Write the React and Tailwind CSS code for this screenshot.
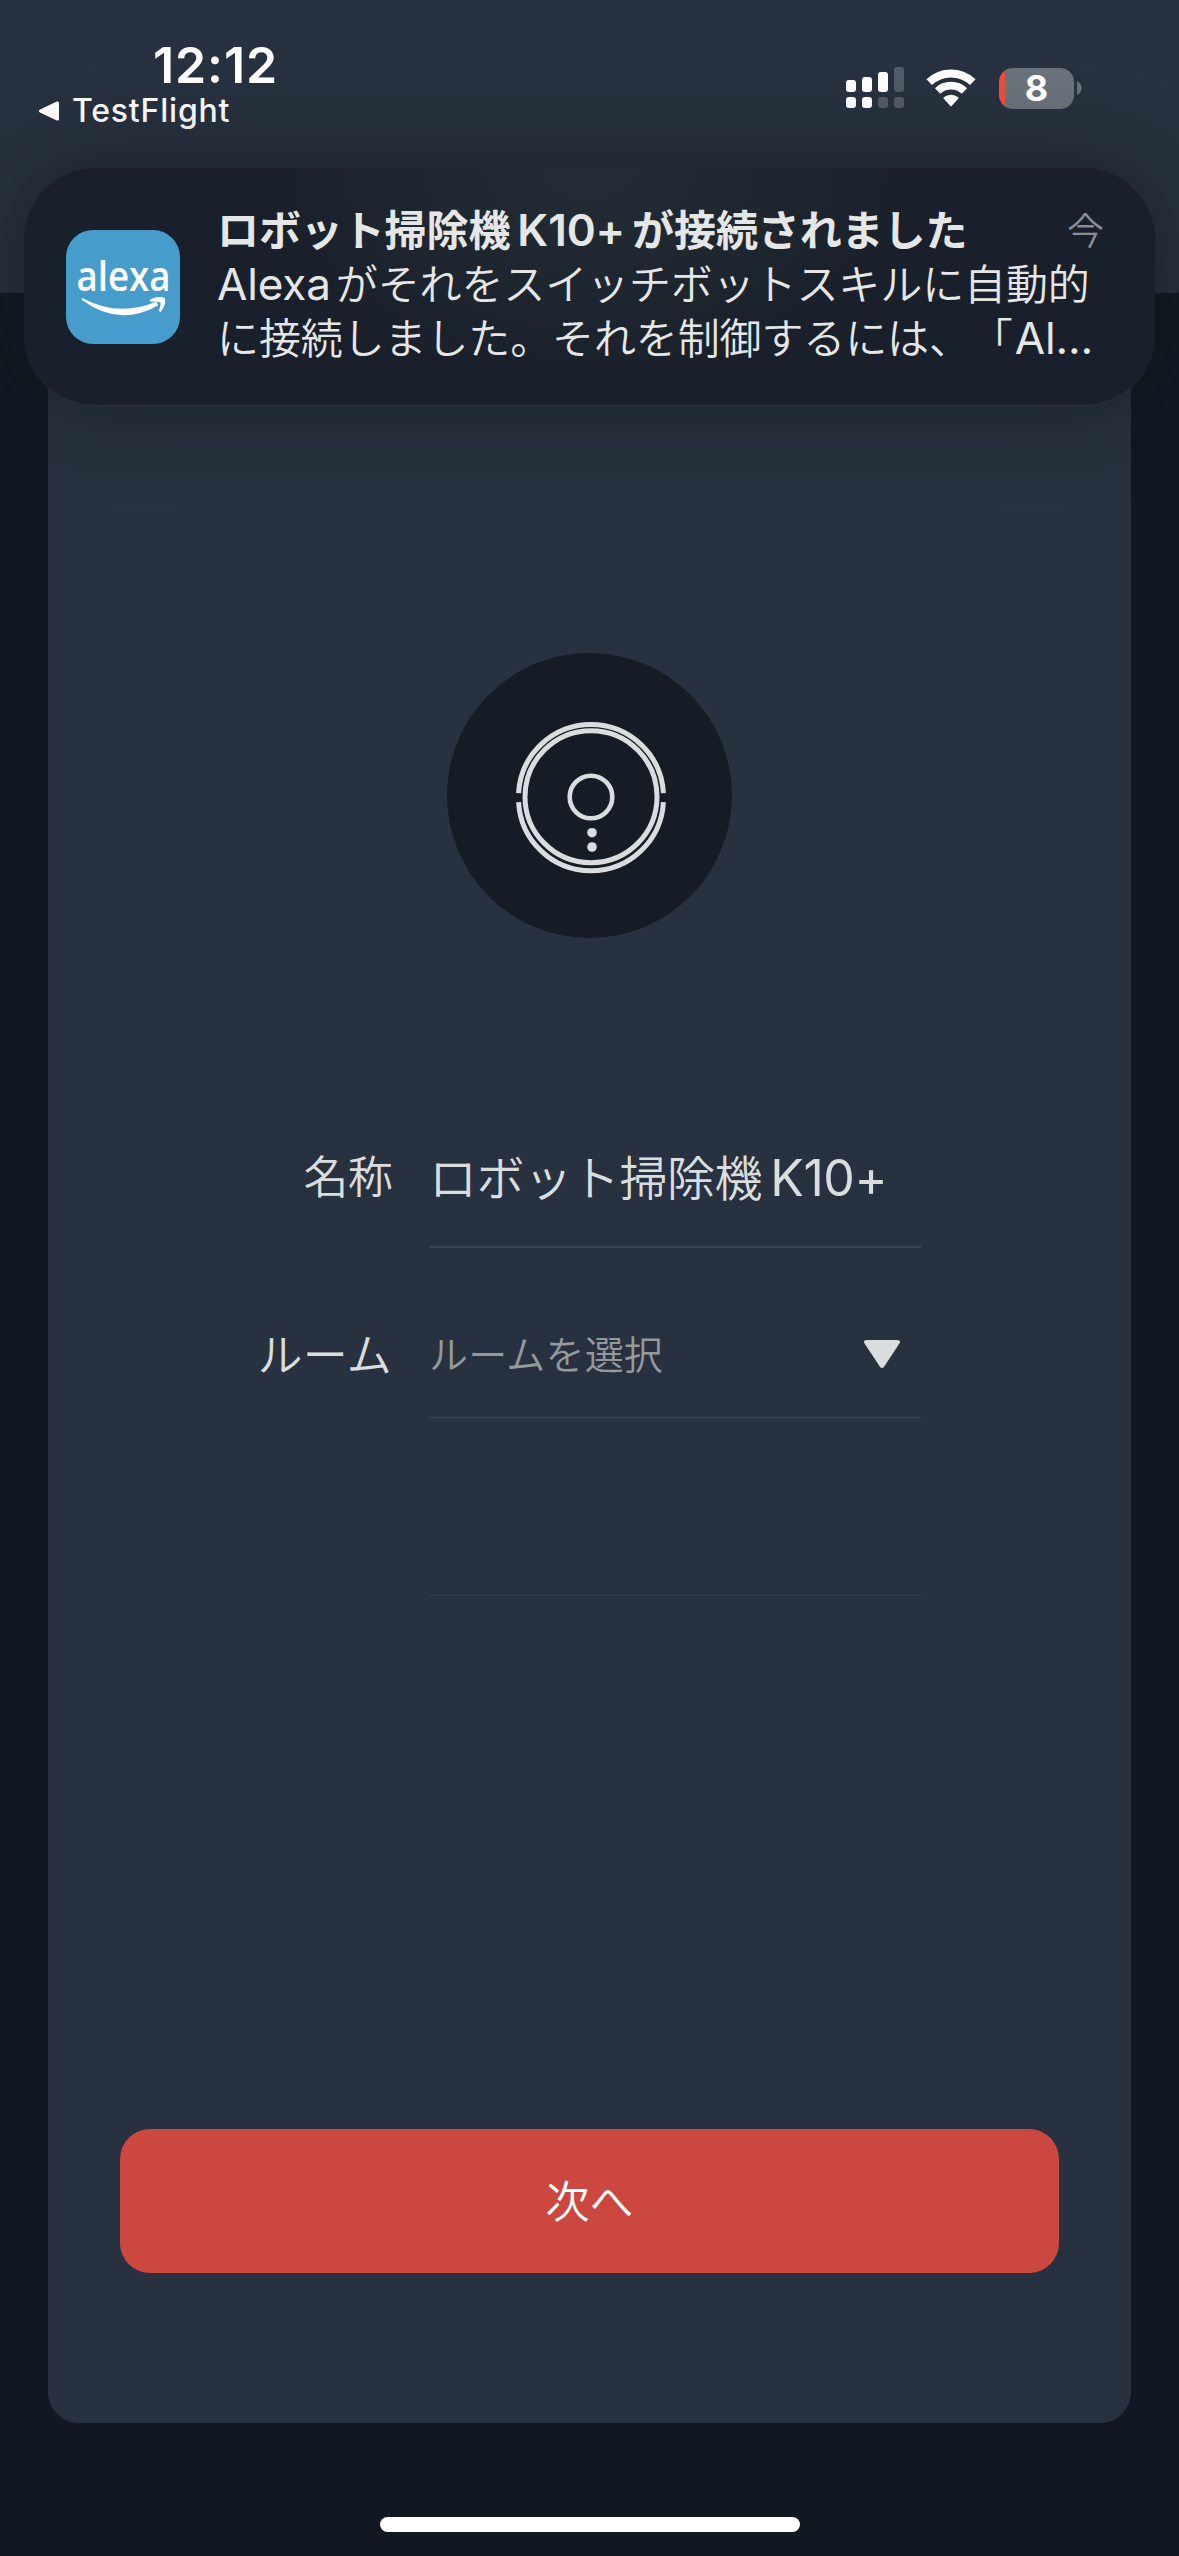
import React from "react";

const sans = "font-['Inter','Noto_Sans_CJK_JP',sans-serif]";

function SignalIcon() {
  return (
    <svg width="58" height="42" viewBox="0 0 58 42" fill="#fff">
      <rect x="0" y="13" width="10" height="12" rx="3" />
      <rect x="16" y="10" width="10" height="15" rx="3" />
      <rect x="32" y="5" width="10" height="20" rx="3" />
      <rect x="48" y="0" width="10" height="25" rx="3" fill="#535b68" />
      <rect x="0" y="30" width="10" height="11" rx="3" />
      <rect x="16" y="30" width="10" height="11" rx="3" />
      <rect x="32" y="30" width="10" height="11" rx="3" fill="#535b68" />
      <rect x="48" y="30" width="10" height="11" rx="3" fill="#535b68" />
    </svg>
  );
}

function WifiIcon() {
  return (
    <svg width="52" height="38" viewBox="0 0 52 38" fill="none">
      <path d="M4.2 13.2 A31.5 31.5 0 0 1 47.8 13.2" stroke="#fff" strokeWidth="8" />
      <path d="M12.6 22 A19.5 19.5 0 0 1 39.4 22" stroke="#fff" strokeWidth="7.6" />
      <path d="M18.6 29.4 Q18.1 28.8 18.8 28.3 A11.5 11.5 0 0 1 33.2 28.3 Q33.9 28.8 33.4 29.4 L26.9 36.8 Q26 37.8 25.1 36.8 Z" fill="#fff" />
    </svg>
  );
}

function Battery() {
  return (
    <div className="flex items-center gap-[3px]">
      <div className="flex h-[41px] w-[75px] items-center justify-center rounded-[14px] bg-[linear-gradient(90deg,#eb4e3d_0_6px,#6a727b_6px)]">
        <span className="text-[36px] leading-none font-bold text-white">8</span>
      </div>
      <svg width="5" height="14" viewBox="0 0 5 14">
        <path d="M0 0 Q4.5 2.5 4.5 7 T0 14 Z" fill="#6a727b" />
      </svg>
    </div>
  );
}

function StatusBar() {
  return (
    <header className="flex h-[293px] items-start justify-between bg-[#28313f] text-white">
      <div className="pt-[36px] pl-[38px]">
        <div className="pl-[115px] text-[50px] leading-[58px] font-semibold tracking-[0.9px]">12:12</div>
        <div className="flex items-center gap-[12px]">
          <svg width="22" height="22" viewBox="0 0 22 22">
            <path d="M2 9.4 L18.8 1.6 Q21 .8 21 3 V19 Q21 21.2 18.8 20.4 L2 12.6 Q-.4 11 2 9.4 Z" fill="#fff" />
          </svg>
          <span className="text-[32px] leading-[34px] font-medium tracking-[0.8px]">TestFlight</span>
        </div>
      </div>
      <div className="flex items-center pt-[67px] pr-[97px]">
        <SignalIcon />
        <div className="pr-[22px] pl-[21px]"><WifiIcon /></div>
        <Battery />
      </div>
    </header>
  );
}

function AlexaIcon() {
  return (
    <svg className="shrink-0 overflow-visible" width="114" height="114" viewBox="0 0 114 114">
      <rect width="114" height="114" rx="27" fill="#469dcc" />
      <text x="57.5" y="60.5" textAnchor="middle" textLength="94" lengthAdjust="spacingAndGlyphs" fill="#fff" fontFamily="'Open Sans', sans-serif" fontWeight="600" fontSize="42">alexa</text>
      <path d="M16.6 68.2 Q53 87.5 90.5 71.5 L92 75.5 Q53 97.5 16 70 Q14.8 67.5 16.6 68.2 Z" fill="#fff" />
      <path d="M84 70 Q92 66 98.3 68.2 Q99.8 75 94.5 81.5 L93.2 80.7 Q96 75 94.6 72 Q91 70.5 84.6 71.2 Z" fill="#fff" stroke="#fff" strokeWidth="1" strokeLinejoin="round" />
    </svg>
  );
}

function NotificationBanner() {
  return (
    <aside className="absolute top-[168px] left-6 flex h-[238px] w-[1131px] rounded-[72px] border-b border-[#29323d] bg-[#19202b] bg-[radial-gradient(ellipse_340px_220px_at_50%_0%,#242d35,#19202b)] pt-[62px] pl-[42px] text-[#e5e7e7] shadow-[0_0_84px_rgba(16,26,26,0.62)]">
      <AlexaIcon />
      <div className="-mt-[27px] ml-[37px] w-[887px] whitespace-nowrap">
        <div className="flex h-[54px] items-center justify-between">
          <p className="text-[42px] leading-[54px] font-bold tracking-[-0.1px]">
            ロボット掃除機<span className="ml-[7px] text-[44px] font-semibold">K10+</span><span className="ml-[7px]">が接続されました</span>
          </p>
          <span className="pt-[4px] text-[37px] font-[350] text-[#868d97]">今</span>
        </div>
        <p className="text-[42px] leading-[54px] font-[350] tracking-[-0.12px]">
          <span className="mr-[5px] text-[44px] font-normal">Alexa</span>がそれをスイッチボットスキルに自動的
        </p>
        <p className="text-[42px] leading-[52px] font-[350] tracking-[-0.12px] [text-spacing-trim:space-all]">
          に接続しました。それを制御するには、「<span className="ml-[2px] text-[44px] font-normal">Al...</span>
        </p>
      </div>
    </aside>
  );
}

function VacuumIcon() {
  return (
    <div className="flex size-[285px] items-center justify-center rounded-full bg-[#151c26]">
      <svg width="285" height="285" viewBox="0 0 285 285" fill="none" stroke="#dadddd">
        <path d="M71.6 140.7 A72.5 72.5 0 0 1 216.4 140.7 M71.6 149.7 A72.5 72.5 0 0 0 216.4 149.7" strokeWidth="5" transform="translate(0 -.6)" />
        <circle cx="144" cy="143.7" r="66" strokeWidth="5" />
        <circle cx="144" cy="144" r="21.3" strokeWidth="4.6" />
        <circle cx="145" cy="179.7" r="4.8" fill="#dadddd" stroke="none" />
        <circle cx="145" cy="194" r="4.8" fill="#dadddd" stroke="none" />
      </svg>
    </div>
  );
}

function Field({ label, heightClass, labelClass = "", lineClass, children }) {
  return (
    <div className={"flex " + heightClass}>
      <div className={"flex w-[345px] items-center justify-end text-[45px] font-[350] text-[#dadddd] " + labelClass}>{label}</div>
      <div className={"ml-[36px] flex w-[492px] items-center border-b " + lineClass}>{children}</div>
    </div>
  );
}

export default function App() {
  return (
    <div className={"relative flex h-[2556px] w-[1179px] flex-col bg-[#111822] " + sans} lang="ja">
      <StatusBar />
      <main className="mx-12 flex h-[2130px] flex-col items-center rounded-b-[31px] bg-[#28313f] pt-[360px]">
        <VacuumIcon />
        <div className="mt-[168px] w-full">
          <Field label="名称" heightClass="h-[142px]" labelClass="pt-[1px] pr-px tracking-[-0.8px]" lineClass="border-b-2 border-[#39444f] pt-[5px]">
            <span className="text-[48px] font-[350] tracking-[-0.4px] whitespace-nowrap text-[#dadddd]">
              ロボット掃除機<span className="ml-[8px] text-[50px] font-normal">K10+</span>
            </span>
          </Field>
          <Field label="ルーム" heightClass="h-[170px]" labelClass="pt-[46px] pr-px tracking-[0.3px]" lineClass="justify-between border-[#3a444f] pt-[44px] pr-[20px]">
            <span className="pt-[2px] text-[39px] font-[350] tracking-[0.2px] text-[#949a9c]">ルームを選択</span>
            <svg width="38" height="30" viewBox="0 0 38 30">
              <path d="M4 0 H34 Q38.5 0 36.3 3.8 L21.2 26.5 Q19 29.5 16.8 26.5 L1.7 3.8 Q-.5 0 4 0 Z" fill="#dadddd" />
            </svg>
          </Field>
          <Field label="" heightClass="h-[178px]" lineClass="border-[#36404c]" />
        </div>
        <button className="mt-[533px] h-[144px] w-[939px] rounded-[30px] bg-[#cd4741] pt-px text-[44px] font-[350] text-white">次へ</button>
      </main>
      <div className="mx-auto mt-[94px] h-[15px] w-[420px] rounded-full bg-white" />
      <NotificationBanner />
    </div>
  );
}
